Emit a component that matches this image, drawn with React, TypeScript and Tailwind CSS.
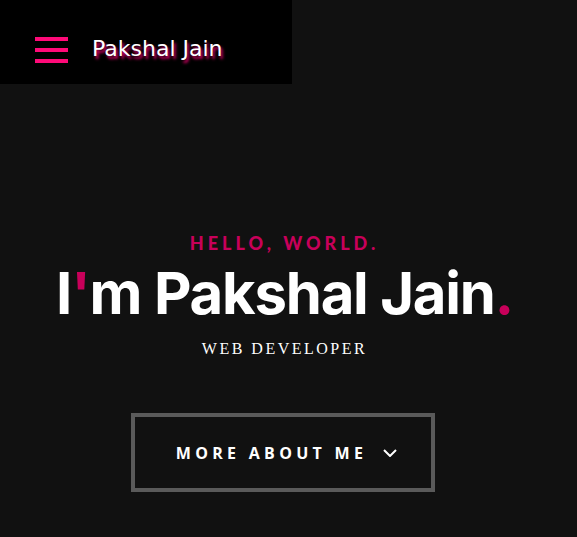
export default function App() {
  return (
    <div className="min-h-[537px] w-full bg-[#111111] text-white">
      <header className="flex h-[84px] w-[292px] items-start gap-6 bg-black pl-[35px] pt-[37px]">
        <div aria-hidden className="flex w-[33px] flex-col gap-[7px]">
          <span className="block h-[4px] bg-[#ff0a78]" />
          <span className="block h-[4px] bg-[#ff0a78]" />
          <span className="block h-[4px] bg-[#ff0a78]" />
        </div>
        <span
          className="-mt-[1px] text-[22px] leading-[26px] text-white [text-shadow:2px_3px_3px_#e0006a]"
          style={{ fontFamily: '"Comic Sans MS", "DejaVu Sans", sans-serif' }}
        >
          Pakshal Jain
        </span>
      </header>

      <section className="flex flex-col items-center pr-[8px] pt-[150px] text-center">
        <p className="font-['Lato',sans-serif] text-[18px] font-black uppercase leading-none tracking-[4px] text-[#c8005a]">
          Hello, World.
        </p>
        <h1 className="mt-[12px] font-['Inter',sans-serif] text-[58px] font-bold leading-none tracking-[-1.2px]">
          I<span className="text-[#c8005a]">'</span>m Pakshal Jain<span className="text-[#c8005a]">.</span>
        </h1>
        <p className="mt-[19px] font-['Liberation_Serif',serif] text-[16px] uppercase leading-none tracking-[2.5px]">
          Web Developer
        </p>

        <button className="mr-[4px] mt-[56px] flex h-[79px] w-[304px] items-center justify-center gap-4 border-4 border-[#5a5a5a] bg-transparent pl-[8px] font-['Open_Sans',sans-serif] text-[16px] font-bold uppercase tracking-[4.3px] text-white">
          <span>More about me</span>
          <svg width="14" height="8" viewBox="0 0 14 8" fill="none" stroke="white" strokeWidth="2">
            <path d="M1 1l6 6 6-6" />
          </svg>
        </button>
      </section>
    </div>
  )
}
